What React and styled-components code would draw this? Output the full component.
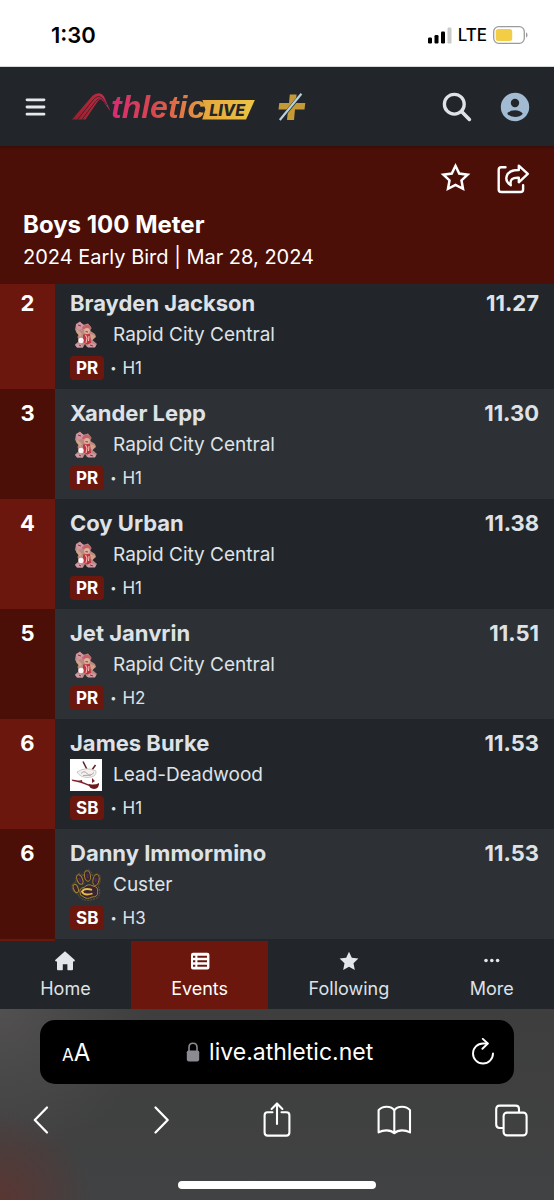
import React from "react";
import styled, { createGlobalStyle } from "styled-components";

const results = [
  { place: 2, name: "Brayden Jackson", team: "Rapid City Central", logo: "rapid", badge: "PR", heat: "H1", mark: "11.27" },
  { place: 3, name: "Xander Lepp", team: "Rapid City Central", logo: "rapid", badge: "PR", heat: "H1", mark: "11.30" },
  { place: 4, name: "Coy Urban", team: "Rapid City Central", logo: "rapid", badge: "PR", heat: "H1", mark: "11.38" },
  { place: 5, name: "Jet Janvrin", team: "Rapid City Central", logo: "rapid", badge: "PR", heat: "H2", mark: "11.51" },
  { place: 6, name: "James Burke", team: "Lead-Deadwood", logo: "lead", badge: "SB", heat: "H1", mark: "11.53" },
  { place: 6, name: "Danny Immormino", team: "Custer", logo: "custer", badge: "SB", heat: "H3", mark: "11.53" },
];

const tabs = [
  { label: "Home", icon: <HomeIcon /> },
  { label: "Events", icon: <ListIcon />, active: true },
  { label: "Following", icon: <StarIcon /> },
  { label: "More", icon: <DotsIcon /> },
];

export default function App() {
  return (
    <Page>
      <GlobalStyle />
      <StatusBar>
        <Clock>1:30</Clock>
        <StatusRight>
          <SignalIcon />
          <span>LTE</span>
          <BatteryIcon />
        </StatusRight>
      </StatusBar>

      <NavBar>
        <IconButton aria-label="Menu" $size={24}>
          <MenuIcon />
        </IconButton>
        <Brand href="#">
          <BrandMark />
          <BrandName>thletic</BrandName>
          <LiveTag>LIVE</LiveTag>
        </Brand>
        <PlusIcon />
        <NavActions>
          <IconButton aria-label="Search" $size={32}>
            <SearchIcon />
          </IconButton>
          <IconButton aria-label="Account" $size={32}>
            <UserIcon />
          </IconButton>
        </NavActions>
      </NavBar>

      <EventHeader>
        <EventActions>
          <IconButton aria-label="Follow event" $size={32}>
            <StarOutlineIcon />
          </IconButton>
          <IconButton aria-label="Share event" $size={34}>
            <ShareIcon />
          </IconButton>
        </EventActions>
        <EventTitle>Boys 100 Meter</EventTitle>
        <EventInfo>2024 Early Bird | Mar 28, 2024</EventInfo>
      </EventHeader>

      <ResultList>
        {results.map((result) => (
          <Row key={result.name}>
            <Place>{result.place}</Place>
            <Athlete>
              <Name>{result.name}</Name>
              <Team>
                <TeamLogo logo={result.logo} />
                <span>{result.team}</span>
              </Team>
              <Details>
                <Badge>{result.badge}</Badge>
                <Dot>•</Dot>
                <span>{result.heat}</span>
              </Details>
            </Athlete>
            <Mark>{result.mark}</Mark>
          </Row>
        ))}
      </ResultList>
      <NextRow />

      <TabBar>
        {tabs.map((tab) => (
          <Tab key={tab.label} href="#" $active={tab.active}>
            {tab.icon}
            <span>{tab.label}</span>
          </Tab>
        ))}
      </TabBar>

      <BrowserBar>
        <AddressBar>
          <TextSize aria-label="Text size">
            <small>A</small>A
          </TextSize>
          <Address>
            <LockIcon />
            <span>live.athletic.net</span>
          </Address>
          <IconButton aria-label="Reload" $size={28}>
            <ReloadIcon />
          </IconButton>
        </AddressBar>
        <Toolbar>
          <IconButton aria-label="Back" $size={40}>
            <BackIcon />
          </IconButton>
          <IconButton aria-label="Forward" $size={40}>
            <ForwardIcon />
          </IconButton>
          <IconButton aria-label="Share" $size={40}>
            <UploadIcon />
          </IconButton>
          <IconButton aria-label="Bookmarks" $size={40}>
            <BookIcon />
          </IconButton>
          <IconButton aria-label="Tabs" $size={40}>
            <TabsIcon />
          </IconButton>
        </Toolbar>
        <HomeIndicator />
      </BrowserBar>
    </Page>
  );
}

function SignalIcon() {
  return (
    <svg width="24" height="17" viewBox="0 0 24 17">
      <rect x="0" y="10.5" width="4" height="6" rx="1.2" />
      <rect x="6.5" y="8" width="4" height="8.5" rx="1.2" />
      <rect x="13" y="4.5" width="4" height="12" rx="1.2" />
      <rect x="19.5" y="0.5" width="4" height="16" rx="1.2" fill="#cacaca" />
    </svg>
  );
}

function BatteryIcon() {
  return (
    <svg width="35" height="18" viewBox="0 0 35 18">
      <rect x="0.7" y="0.7" width="30.6" height="16.6" rx="5" fill="none" stroke="#9b9b9b" strokeWidth="1.3" />
      <rect x="2.7" y="3" width="16.5" height="12" rx="2.5" fill="#f3cd46" />
      <path d="M33 6.3 Q34.6 7.2 34.6 9 Q34.6 10.8 33 11.7 Z" fill="#9b9b9b" />
    </svg>
  );
}

function MenuIcon() {
  return (
    <svg width="24" height="24" viewBox="0 0 24 24" stroke="#e6e9ec" strokeWidth="2.8" strokeLinecap="round">
      <path d="M4 4.8H21M4 12H21M4 19.2H21" />
    </svg>
  );
}

function BrandMark() {
  return (
    <svg width="39" height="27" viewBox="0 0 39 27">
      <defs>
        <linearGradient id="swoosh" x1="0" y1="0" x2="1" y2="0">
          <stop offset="0" stopColor="#94202f" />
          <stop offset="0.6" stopColor="#b82639" />
          <stop offset="1" stopColor="#d02a5c" />
        </linearGradient>
      </defs>
      <path
        fill="url(#swoosh)"
        d="M0 26.5 L20.5 2.8 Q23.5 0 27 0.2 Q30.5 0.5 32 3.5 L38.5 18.5 L31.5 8.5 Q28.5 5 25.5 8.5 L13.5 26.5 Z"
      />
      <path
        d="M5.5 26.5 L21.5 6.5 Q26 1.5 30 5 L35 12 M10 26.5 L23.5 8.5 Q26.5 4.5 30 7"
        stroke="#22262a"
        strokeWidth="0.8"
        fill="none"
      />
    </svg>
  );
}

function PlusIcon() {
  return (
    <svg width="30" height="30" viewBox="0 0 30 30">
      <path d="M12.8 2.5 H19.6 L18.7 11 H28.3 L27.5 17.5 H18 L17 28 H10 L11 17.5 H1.5 L2.3 11 H12 Z" fill="#c39a36" />
      <path d="M3 28 L24.5 2" stroke="#22262a" strokeWidth="3.4" />
      <path d="M2.8 28 L24.4 1.8" stroke="#b7d0df" strokeWidth="2.2" />
    </svg>
  );
}

function SearchIcon() {
  return (
    <svg width="32" height="32" viewBox="0 0 32 32" fill="none" stroke="#dfe3e8" strokeLinecap="round">
      <circle cx="13.3" cy="13.2" r="9.9" strokeWidth="3.3" />
      <path d="M20.8 20.8 L28.4 28.4" strokeWidth="3.6" />
    </svg>
  );
}

function UserIcon() {
  return (
    <svg width="32" height="32" viewBox="0 0 32 32">
      <circle cx="16" cy="16" r="14.2" fill="#a2bbd3" />
      <circle cx="16" cy="12" r="4.2" fill="#22262a" />
      <path d="M8.2 22.8 Q10.5 19.3 16 19.3 Q21.5 19.3 23.8 22.8 Q21 26 16 26 Q11 26 8.2 22.8 Z" fill="#22262a" />
    </svg>
  );
}

function StarOutlineIcon() {
  return (
    <svg width="32" height="32" viewBox="0 0 32 32">
      <path
        d="M15.5 4.8 L19.2 12.6 L27.6 13.7 L21.5 19.4 L23 27.8 L15.5 23.8 L8 27.8 L9.5 19.4 L3.4 13.7 L11.8 12.6 Z"
        fill="none"
        stroke="#fff"
        strokeWidth="2.5"
      />
    </svg>
  );
}

function ShareIcon() {
  return (
    <svg width="34" height="32" viewBox="0 0 34 32" fill="none" stroke="#fff" strokeWidth="2.4" strokeLinecap="round" strokeLinejoin="round">
      <path d="M8.5 5.2 H4.3 Q1.7 5.2 1.7 7.8 V27.4 Q1.7 30 4.3 30 H23.5 Q26.1 30 26.1 27.4 V23.3" />
      <path d="M21.8 3.6 L30.8 11.8 L21.8 20.3 V15.8 C15.5 15.4 12.6 17.4 13.8 23.2 C6.4 18.4 8 7.8 21.8 8 Z" />
    </svg>
  );
}

function HomeIcon() {
  return (
    <svg width="22" height="22" viewBox="0 0 22 22" fill="#e3e6ea">
      <path d="M11 1.2 L20.8 10 Q21.3 11.6 19.6 11.6 H19 V19.2 Q19 20.2 18 20.2 H14 Q13.4 20.2 13.4 19.5 V14.2 H8.8 V19.5 Q8.8 20.2 8.2 20.2 H4 Q3 20.2 3 19.2 V11.6 H2.2 Q0.6 11.4 1.2 10 Z" />
    </svg>
  );
}

function ListIcon() {
  return (
    <svg width="22" height="22" viewBox="0 0 22 22">
      <rect x="2" y="2.8" width="18.4" height="16.6" rx="2" fill="#fff" />
      <path d="M4 6.7H6.3M4 11.2H6.3M4 15.7H6.3M8.4 6.7H18M8.4 11.2H18M8.4 15.7H18" stroke="#6b170d" strokeWidth="2" />
    </svg>
  );
}

function StarIcon() {
  return (
    <svg width="22" height="22" viewBox="0 0 22 22" fill="#e3e6ea">
      <path d="M11 1.7 L13.8 7.8 L20.4 8.6 L15.5 13.2 L16.8 20 L11 16.7 L5.2 20 L6.5 13.2 L1.6 8.6 L8.2 7.8 Z" />
    </svg>
  );
}

function DotsIcon() {
  return (
    <svg width="22" height="22" viewBox="0 0 22 22" fill="#e3e6ea">
      <circle cx="5" cy="10.5" r="1.8" />
      <circle cx="10.8" cy="10.5" r="1.8" />
      <circle cx="16.6" cy="10.5" r="1.8" />
    </svg>
  );
}

function LockIcon() {
  return (
    <svg width="14" height="20" viewBox="0 0 14 20">
      <path d="M3 9 V5.4 Q3 1.2 7 1.2 Q11 1.2 11 5.4 V9" fill="none" stroke="#8b8b92" strokeWidth="1.6" />
      <rect x="0.8" y="8.4" width="12.4" height="11" rx="1.8" fill="#8b8b92" />
    </svg>
  );
}

function ReloadIcon() {
  return (
    <svg width="28" height="28" viewBox="0 0 28 28" fill="none" stroke="#fff" strokeWidth="1.9" strokeLinecap="round">
      <path d="M24 15.5 A10 10 0 1 1 14 5.5 H18.5" />
      <path d="M13.8 0.9 L18.8 5.5 L13.4 10.8" strokeLinejoin="round" />
    </svg>
  );
}

function BackIcon() {
  return (
    <svg width="40" height="40" viewBox="0 0 40 40" fill="none" stroke="#fff" strokeWidth="2.3" strokeLinecap="round" strokeLinejoin="round">
      <path d="M26 7.5 L13.8 20 L26 32.5" />
    </svg>
  );
}

function ForwardIcon() {
  return (
    <svg width="40" height="40" viewBox="0 0 40 40" fill="none" stroke="#fff" strokeWidth="2.3" strokeLinecap="round" strokeLinejoin="round">
      <path d="M16.5 7.5 L28.7 20 L16.5 32.5" />
    </svg>
  );
}

function UploadIcon() {
  return (
    <svg width="40" height="40" viewBox="0 0 40 40" fill="none" stroke="#fff" strokeWidth="2.1" strokeLinecap="round" strokeLinejoin="round">
      <path d="M16.5 12.3 H11.6 Q8.6 12.3 8.6 15.3 V32.5 Q8.6 35.6 11.6 35.6 H30.4 Q33.4 35.6 33.4 32.5 V15.3 Q33.4 12.3 30.4 12.3 H25.5" />
      <path d="M21 24 V3.8 M15.6 9 L21 3.4 L26.4 9" />
    </svg>
  );
}

function BookIcon() {
  return (
    <svg width="40" height="40" viewBox="0 0 40 40" fill="none" stroke="#fff" strokeWidth="2.1" strokeLinecap="round" strokeLinejoin="round">
      <path d="M20.3 10.5 Q18 6.8 12.6 6.8 Q7.4 6.8 4.6 10.2 V32.4 Q8 30.4 12.6 30.4 Q17.4 30.4 20.3 33.2 Q23.2 30.4 28 30.4 Q32.6 30.4 36 32.4 V10.2 Q33.2 6.8 28 6.8 Q22.6 6.8 20.3 10.5 V33" />
    </svg>
  );
}

function TabsIcon() {
  return (
    <svg width="40" height="40" viewBox="0 0 40 40" fill="none" stroke="#fff" strokeWidth="2.1">
      <path d="M12.3 28 H8.6 Q5.2 28 5.2 24.6 V9 Q5.2 5.6 8.6 5.6 H24.6 Q28 5.6 28 9 V12.5" />
      <rect x="12.6" y="12.6" width="23" height="22.8" rx="3.4" />
    </svg>
  );
}

function TeamLogo({ logo }) {
  if (logo === "lead") {
    return (
      <svg width="32" height="32" viewBox="0 0 32 32">
        <rect width="32" height="32" fill="#fff" />
        <path d="M13 2.5 L16.8 10 M25.5 6 L22.3 10.5" stroke="#5b2226" strokeWidth="1.5" />
        <path d="M7 13 Q16 7 26 12 Q27 18 18 18.5 Q10 18.5 7 13 Z" fill="#f4f0f0" stroke="#bdb5b5" strokeWidth="0.7" />
        <path d="M11 14.5 Q14 11 17 14.5 T24 13.5 M13 16.5 L21 16.2" stroke="#a89c9d" strokeWidth="0.9" fill="none" />
        <path d="M1.5 20.5 Q9 21 19 25.5 L19 27 Q10 23 2.5 22 Z" fill="#7d2228" />
        <path d="M7 22 L12 21 L12.5 23.5 Z M22 19 L25 22 L22 24 Z" fill="#7d2228" />
        <path d="M19 25 Q25 26.5 29 24 Q29.5 29.5 24 30 Q19.5 29.5 18.5 25.5 Z" fill="#6d181d" />
      </svg>
    );
  }
  if (logo === "custer") {
    return (
      <svg width="32" height="32" viewBox="0 0 32 32">
        <g fill="#3b2430" stroke="#a5832f" strokeWidth="1">
          <ellipse cx="5.8" cy="19.5" rx="2.3" ry="4.3" transform="rotate(-20 5.8 19.5)" />
          <ellipse cx="9.8" cy="10.5" rx="2.7" ry="5" transform="rotate(-22 9.8 10.5)" />
          <ellipse cx="17.5" cy="7" rx="3" ry="5.3" transform="rotate(-8 17.5 7)" />
          <ellipse cx="26" cy="11" rx="3" ry="5.5" transform="rotate(12 26 11)" />
          <path d="M10 23 Q9 19 14 18.5 Q18 14 23 17 Q29 18 27.5 23.5 Q28 28 22 28 Q17 31 13 27.5 Q9.5 27 10 23 Z" />
        </g>
        <g fill="none" stroke="#7e682e" strokeWidth="0.7" strokeDasharray="2 1">
          <path d="M2 17 Q3 13 6 14 Q5 6 10 4 Q12 5 13 7 Q14 0 19 1 Q22 3 22.5 7 Q28 3 30 7 Q31 13 28 17 Q32 24 27 29 Q18 33 12 30 Q9 28 8 25 Q2 23 2 17" />
          <path d="M12 16 L15 14 M22 13 L24 17" />
        </g>
        <path d="M22 20.8 Q14 18.5 12 22.7 Q14 27.2 22.5 24.5" fill="none" stroke="#e4bd4d" strokeWidth="1.8" />
        <path d="M9 9 L11 13 M17 5 L18 9 M25.5 9 L26 13" stroke="#4b2a72" strokeWidth="1.8" />
      </svg>
    );
  }
  return (
    <svg width="32" height="32" viewBox="0 0 32 32">
      <path d="M6 5 L10 2.5 L13 6 L18 4.5 L21 8 L20.5 12 L25 15 L26 18 L22.5 21 L27 25 L25 28 L17 28 L15 25 L13 28.5 L7 28.5 L5 25.5 L9 22 L7.5 18 L9 15 L5 11 Z" fill="#b98a82" />
      <path d="M6 5.5 L10 3 L14 6 L13 9 L9 11 L6.5 9 Z" fill="#cf95a2" />
      <path d="M12 8.5 Q16 3.5 21 8 L22 9.5 L12.5 10 Z" fill="#c8606c" />
      <circle cx="17" cy="12" r="2.9" fill="#ddb29c" />
      <path d="M7 10 L12 15 L10 18 L6 13 Z M20 15 L25.5 17 L22.5 21 L20 19 Z" fill="#d0a389" />
      <path d="M13 15.5 L20 15 L21 24 L17 25.5 L13 23 Z" fill="#c2323f" />
      <path d="M15.5 16 L17 19 L16 24 M19 17 L18.5 22" stroke="#efb9b4" strokeWidth="1.1" fill="none" />
      <circle cx="11" cy="21.5" r="2.7" fill="#faf3f3" />
      <path d="M5 26 Q8 23 12 26 L13 28.5 H7 Z M17 27 Q20 22 26 26 L25 28.5 H18 Z" fill="#cf99a5" />
      <path d="M8 6 L11 7 M9 26 L11 27 M20 26 L23 27 M15.5 12.6 L18 13" stroke="#8a313c" strokeWidth="1" />
    </svg>
  );
}

const GlobalStyle = createGlobalStyle`
  * {
    box-sizing: border-box;
  }
  body {
    margin: 0;
    background: #22262a;
    color: #dee2e6;
    font-family: Inter, "Liberation Sans", sans-serif;
  }
  svg {
    display: block;
    flex-shrink: 0;
  }
`;

const Page = styled.div`
  display: flex;
  flex-direction: column;
  min-height: 100vh;
`;

const StatusBar = styled.div`
  display: flex;
  align-items: center;
  justify-content: space-between;
  height: 67px;
  padding: 4px 26px 0 51px;
  background: #fff;
  border-bottom: 1px solid #d5d9da;
  color: #000;
`;

const Clock = styled.span`
  font-size: 22px;
  font-weight: 600;
`;

const StatusRight = styled.div`
  display: flex;
  align-items: center;
  gap: 6px;
  font-size: 17px;
  font-weight: 500;
`;

const NavBar = styled.header`
  display: flex;
  align-items: center;
  height: 79px;
  padding: 0 23px;
  background: #22262a;
`;

const IconButton = styled.button`
  display: flex;
  align-items: center;
  justify-content: center;
  width: ${(props) => props.$size}px;
  height: ${(props) => props.$size}px;
  padding: 0;
  border: none;
  background: none;
  cursor: pointer;
`;

const Brand = styled.a`
  display: flex;
  align-items: center;
  margin: 0 22px 0 25px;
  text-decoration: none;
`;

const BrandName = styled.span`
  font-family: "Liberation Sans", sans-serif;
  font-size: 32px;
  font-style: italic;
  font-weight: 700;
  line-height: 40px;
  background: linear-gradient(90deg, #d62b74, #d8474f 45%, #e8a03c);
  background-clip: text;
  -webkit-background-clip: text;
  color: transparent;
`;

const LiveTag = styled.span`
  margin: 6px 0 0 -3px;
  padding: 0 10px 0 7px;
  background: linear-gradient(90deg, #e5a63c, #edc443);
  clip-path: polygon(0 0, 100% 0, 83% 100%, 0 100%, 6% 50%);
  color: #22262a;
  font-size: 16px;
  font-style: italic;
  font-weight: 800;
  line-height: 20px;
`;

const NavActions = styled.div`
  display: flex;
  gap: 26px;
  margin-left: auto;
`;

const EventHeader = styled.section`
  padding: 15px 23px 11px;
  background: linear-gradient(#3a0d09, #4b0f07 4px);
  color: #fff;
`;

const EventActions = styled.div`
  display: flex;
  justify-content: flex-end;
  gap: 25px;
`;

const EventTitle = styled.h1`
  margin: 14px 0 0;
  font-size: 24px;
  font-weight: 700;
  line-height: 32px;
`;

const EventInfo = styled.p`
  margin: 0;
  font-size: 20px;
  line-height: 32px;
`;

const ResultList = styled.ol`
  margin: 0;
  padding: 0;
  list-style: none;
`;

const Place = styled.div`
  display: flex;
  justify-content: center;
  width: 55px;
  padding-top: 8px;
  background: #6b170d;
  color: #fff;
  font-size: 22px;
  font-weight: 700;
  line-height: 32px;
`;

const Athlete = styled.div`
  flex: 1;
  padding: 8px 0 4px 15px;
`;

const Mark = styled.div`
  padding: 8px 15px 0 0;
  font-size: 22px;
  font-weight: 700;
  line-height: 32px;
`;

const Row = styled.li`
  display: flex;
  background: #22262a;

  &:nth-child(even) {
    background: #2d3135;
  }
  &:nth-child(even) ${Place} {
    background: #4b0f07;
  }
  &:first-child > * {
    padding-top: 3px;
  }
`;

const Name = styled.div`
  font-size: 22px;
  font-weight: 700;
  line-height: 32px;
`;

const Team = styled.div`
  display: flex;
  align-items: center;
  gap: 11px;
  font-size: 19px;
  line-height: 32px;
`;

const Details = styled.div`
  display: flex;
  align-items: center;
  gap: 6px;
  height: 34px;
  font-size: 17px;
`;

const Badge = styled.span`
  padding: 0 6px;
  border-radius: 4px;
  background: #6b170d;
  color: #fff;
  font-weight: 700;
  line-height: 24px;
`;

const Dot = styled.span`
  font-size: 11px;
`;

const NextRow = styled.div`
  height: 2px;
  border-left: 55px solid #6b170d;
  background: #22262a;
`;

const TabBar = styled.nav`
  display: flex;
  height: 68px;
  background: #22262a;
`;

const Tab = styled.a`
  display: flex;
  flex: 1 1 auto;
  flex-direction: column;
  align-items: center;
  padding-top: 9px;
  background: ${(props) => (props.$active ? "#6b170d" : "none")};
  color: ${(props) => (props.$active ? "#fff" : "#dee2e6")};
  font-size: 18px;
  line-height: 34px;
  text-decoration: none;
`;

const BrowserBar = styled.footer`
  flex: 1;
  padding: 11px 0;
  background:
    radial-gradient(circle at 0 100%, #5a3632, transparent 90px),
    radial-gradient(circle at 0 0, #525051, transparent 150px),
    linear-gradient(#3e3e3e, #414243);
`;

const AddressBar = styled.div`
  display: flex;
  align-items: center;
  justify-content: space-between;
  height: 64px;
  margin: 0 40px;
  padding: 0 17px 0 22px;
  border-radius: 15px;
  background: #000;
  color: #fff;
`;

const TextSize = styled.button`
  padding: 0;
  border: none;
  background: none;
  color: #fff;
  font-family: inherit;
  font-size: 24px;

  small {
    font-size: 17px;
  }
`;

const Address = styled.div`
  display: flex;
  align-items: center;
  gap: 9px;
  font-size: 23px;
`;

const Toolbar = styled.div`
  display: flex;
  justify-content: space-between;
  margin-top: 16px;
  padding: 0 23px 0 21px;
`;

const HomeIndicator = styled.div`
  width: 198px;
  height: 8px;
  margin: 41px auto 0;
  border-radius: 4px;
  background: #fff;
`;
